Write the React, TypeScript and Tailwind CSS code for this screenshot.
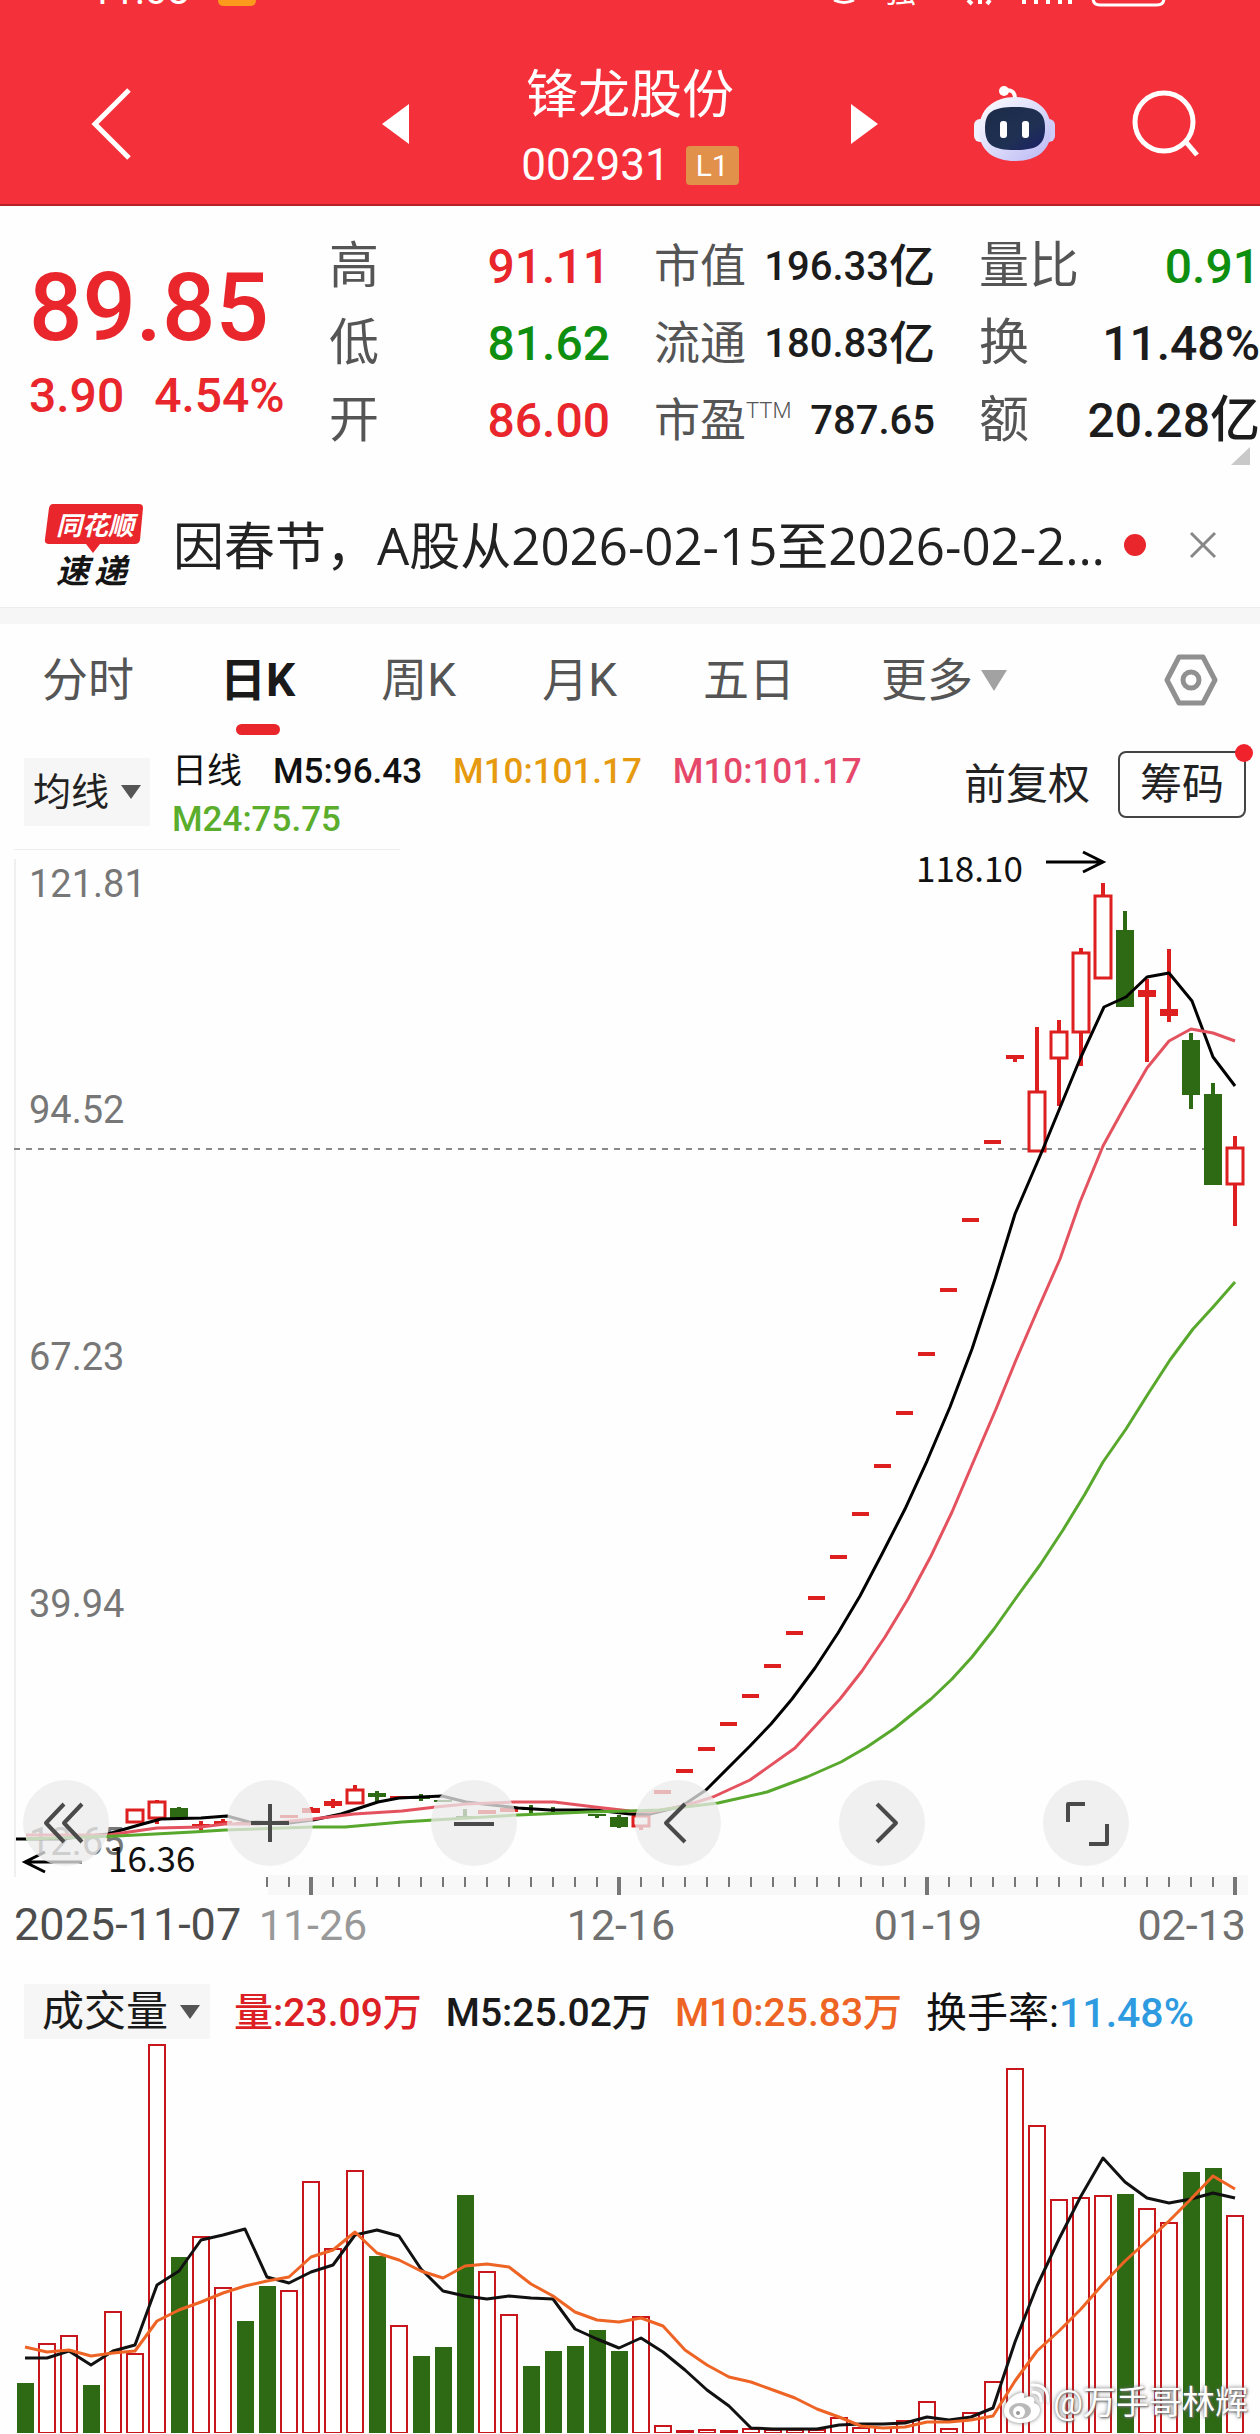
import { Fragment } from "react";

const RED = "#dd1f1f";
const GREEN = "#2e6a14";

// one slot per trading day
const STEP = 22;
const dayX = (i: number) => 25 + STEP * i;

type Candle = {
  i: number;
  up: boolean;
  top: number;
  bottom: number;
  high?: number;
  low?: number;
  solid?: boolean;
};

const candles: Candle[] = [
  { i: 5, up: true, top: 1811, bottom: 1823 },
  { i: 6, up: true, top: 1803, bottom: 1819, high: 1801, low: 1825 },
  { i: 7, up: false, top: 1809, bottom: 1820, high: 1808 },
  { i: 8, up: true, top: 1825, bottom: 1828, high: 1822, low: 1831, solid: true },
  { i: 9, up: true, top: 1822, bottom: 1826, high: 1820, solid: true },
  { i: 10, up: true, top: 1823, bottom: 1826, solid: true },
  { i: 12, up: true, top: 1816, bottom: 1819, solid: true },
  { i: 13, up: true, top: 1809, bottom: 1814, high: 1808, solid: true },
  { i: 14, up: true, top: 1802, bottom: 1807, high: 1800, low: 1809, solid: true },
  { i: 15, up: true, top: 1791, bottom: 1804, high: 1786 },
  { i: 16, up: false, top: 1794, bottom: 1798, high: 1792, low: 1803, solid: true },
  { i: 17, up: true, top: 1797, bottom: 1800, solid: true },
  { i: 18, up: false, top: 1797, bottom: 1800, high: 1795, low: 1802, solid: true },
  { i: 19, up: false, top: 1801, bottom: 1803, solid: true },
  { i: 20, up: false, top: 1817, bottom: 1819, high: 1810, solid: true },
  { i: 21, up: true, top: 1811, bottom: 1815, solid: true },
  { i: 22, up: true, top: 1809, bottom: 1813, solid: true },
  { i: 23, up: false, top: 1809, bottom: 1811, high: 1806, low: 1814, solid: true },
  { i: 24, up: false, top: 1810, bottom: 1812, high: 1808, low: 1813, solid: true },
  { i: 26, up: false, top: 1815, bottom: 1817, low: 1819, solid: true },
  { i: 27, up: false, top: 1818, bottom: 1828, high: 1816, low: 1829 },
  { i: 28, up: true, top: 1817, bottom: 1827, low: 1831 },
  { i: 45, up: true, top: 1056, bottom: 1060, low: 1063, solid: true },
  { i: 46, up: true, top: 1093, bottom: 1152, high: 1028 },
  { i: 47, up: true, top: 1033, bottom: 1059, high: 1021, low: 1107 },
  { i: 48, up: true, top: 954, bottom: 1033, high: 949, low: 1067 },
  { i: 49, up: true, top: 897, bottom: 979, high: 884 },
  { i: 50, up: false, top: 931, bottom: 1008, high: 912 },
  { i: 51, up: true, top: 991, bottom: 998, high: 980, low: 1063, solid: true },
  { i: 52, up: true, top: 1010, bottom: 1017, high: 950, low: 1023, solid: true },
  { i: 53, up: false, top: 1041, bottom: 1096, high: 1034, low: 1110 },
  { i: 54, up: false, top: 1095, bottom: 1186, high: 1084 },
  { i: 55, up: true, top: 1149, bottom: 1185, high: 1137, low: 1227 },
];

// limit-up days, open = close, starting at slot 29
const limitUps = [
  1793, 1772, 1750, 1725, 1697, 1667, 1634, 1599, 1558, 1515, 1467, 1414, 1355,
  1291, 1221, 1143,
];

const priceM5 =
  "16,1840 60,1840 108,1835 139,1826 161,1820 201,1819 227,1817 249,1823 289,1824 313,1821 341,1815 378,1803 399,1799 442,1797 466,1803 518,1809 550,1811 595,1811 630,1815 650,1815 682,1807 706,1791 750,1747 771,1725 792,1700 815,1669 838,1634 860,1597 882,1555 905,1510 927,1462 950,1408 972,1350 995,1280 1015,1215 1043,1150 1080,1060 1104,1008 1126,998 1147,978 1169,974 1192,1002 1213,1058 1235,1087";
const priceM10 =
  "26,1836 108,1836 157,1829 201,1828 225,1825 257,1825 313,1820 354,1815 402,1812 436,1808 466,1805 514,1803 554,1803 595,1808 630,1812 650,1813 684,1807 713,1798 750,1781 795,1749 819,1723 840,1700 862,1672 885,1638 908,1600 931,1557 952,1513 972,1466 996,1410 1016,1361 1038,1310 1060,1260 1080,1203 1103,1147 1125,1107 1147,1069 1169,1042 1191,1030 1213,1034 1235,1042";
const priceM24 =
  "26,1840 117,1837 193,1833 225,1831 313,1828 345,1828 402,1823 434,1821 518,1816 587,1813 630,1812 660,1811 718,1804 767,1793 807,1778 841,1763 867,1748 895,1729 931,1700 952,1680 972,1658 994,1630 1016,1599 1040,1566 1063,1531 1085,1495 1103,1463 1126,1430 1148,1395 1170,1361 1193,1330 1214,1307 1235,1283";

// [top, isUp]
const volumes: [number, boolean][] = [
  [2384, false], [2344, true], [2336, true], [2386, false], [2312, true],
  [2354, true], [2045, true], [2258, false], [2237, true], [2288, true],
  [2322, false], [2287, false], [2291, true], [2182, true], [2249, true],
  [2171, true], [2257, false], [2326, true], [2357, false], [2348, false],
  [2196, false], [2272, true], [2315, true], [2367, false], [2352, false],
  [2347, false], [2331, false], [2352, false], [2317, true], [2426, true],
  [2431, true], [2430, true], [2431, true], [2429, true], [2430, true],
  [2430, true], [2430, true], [2418, true], [2428, true], [2428, true],
  [2421, true], [2402, true], [2429, true], [2413, true], [2382, true],
  [2069, true], [2126, true], [2200, true], [2198, true], [2196, true],
  [2195, false], [2209, true], [2223, true], [2173, false], [2169, false],
  [2216, true],
];

const volM5 = [
  2359, 2359, 2352, 2366, 2352, 2346, 2286, 2272, 2241, 2236, 2230, 2278, 2284,
  2273, 2266, 2236, 2231, 2237, 2270, 2292, 2297, 2300, 2297, 2299, 2300, 2330,
  2340, 2349, 2339, 2353, 2371, 2391, 2407, 2429, 2430, 2430, 2430, 2426, 2425,
  2425, 2424, 2418, 2421, 2418, 2409, 2343, 2287, 2240, 2197, 2159, 2183, 2199,
  2204, 2200, 2194, 2199,
];
const volM10 = [
  2348, 2353, 2351, 2357, 2354, 2352, 2322, 2311, 2303, 2294, 2287, 2282, 2278,
  2258, 2251, 2233, 2254, 2261, 2272, 2279, 2267, 2265, 2268, 2285, 2297, 2313,
  2321, 2323, 2319, 2327, 2351, 2366, 2378, 2383, 2391, 2399, 2410, 2418, 2427,
  2429, 2428, 2423, 2423, 2421, 2417, 2382, 2352, 2332, 2310, 2285, 2262, 2242,
  2222, 2200, 2177, 2190,
];
const toPoints = (ys: number[]) => ys.map((y, i) => `${dayX(i)},${y}`).join(" ");

const priceLabels: [string, number][] = [
  ["121.81", 898],
  ["94.52", 1124],
  ["67.23", 1371],
  ["39.94", 1618],
  ["12.65", 1856],
];

const majorTicks = [13, 27, 41, 55];

function StatusBar() {
  return (
    <svg viewBox="0 0 1260 8" className="block w-full" aria-hidden="true">
      <g fill="#fff" fontSize="40">
        <text x="90" y="4">11:08</text>
        <text x="884" y="2" fontSize="32">强</text>
      </g>
      <path d="M218 -20h38v20q0 6-6 6h-26q-6 0-6-6z" fill="#fb9a1c" />
      <path d="M834 0q10 5 20 0" stroke="#fff" strokeWidth="3" fill="none" />
      <path d="M968 0l4 4M980 0v4M990 0l-3 4M1024 0v4M1036 0v4M1048 0v4M1060 0v4M1070 0v4" stroke="#fff" strokeWidth="4" />
      <path d="M1093 -10v8q0 7 7 7h57q7 0 7-7v-8" stroke="#fff" strokeWidth="3" fill="none" />
    </svg>
  );
}

function Robot() {
  return (
    <svg width="81" height="76" viewBox="0 0 81 76" aria-hidden="true">
      <defs>
        <linearGradient id="shell" x1="0" y1="0" x2="1" y2="1">
          <stop offset="0" stopColor="#fff" />
          <stop offset=".5" stopColor="#dcdcfb" />
          <stop offset="1" stopColor="#b9b6f2" />
        </linearGradient>
        <linearGradient id="visor" x1="0" y1="0" x2="1" y2="1">
          <stop offset="0" stopColor="#1c2a48" />
          <stop offset=".6" stopColor="#1f3152" />
          <stop offset="1" stopColor="#1b2068" />
        </linearGradient>
      </defs>
      <path d="M30 5q11-3 11 8" stroke="#fff" strokeWidth="4" fill="none" />
      <circle cx="30" cy="5" r="5" fill="#fff" />
      <rect x="0" y="33" width="14" height="23" rx="6" fill="#f1f0ff" />
      <rect x="67" y="33" width="14" height="23" rx="6" fill="#cfcdf8" />
      <path d="M41 11C62 11 77 23 77 44C77 65 62 75 41 75C20 75 5 65 5 44C5 23 20 11 41 11Z" fill="url(#shell)" />
      <path d="M41 21C63 21 71 26 71 42C71 59 63 64 41 64C19 64 11 59 11 42C11 26 19 21 41 21Z" fill="url(#visor)" />
      <rect x="26" y="35" width="7" height="17" rx="3" fill="#fff" />
      <rect x="48" y="35" width="7" height="17" rx="3" fill="#fff" />
    </svg>
  );
}

function Header() {
  return (
    <header className="bg-[#f4303a] border-b-2 border-[#b5202a] text-white">
      <StatusBar />
      <div className="grid grid-cols-[1fr_auto_1fr] items-center pt-[43px] pb-[7px]">
        <div className="pl-[91px]">
          <button aria-label="返回" className="block">
            <svg width="42" height="74" viewBox="0 0 42 74" fill="none" stroke="#fff" strokeWidth="5">
              <path d="M38 3L4 37l34 34" />
            </svg>
          </button>
        </div>
        <div className="flex items-center gap-[112px]">
          <button aria-label="上一只">
            <svg width="27" height="40" viewBox="0 0 27 40" fill="#fff"><path d="M27 0v40L0 20z" /></svg>
          </button>
          <div className="flex flex-col items-center pt-2">
            <h1 className="text-[52px] leading-[74px]">锋龙股份</h1>
            <div className="flex items-center gap-4 leading-[64px]">
              <span className="text-[44px]">002931</span>
              <span className="bg-[#e2914a] rounded-sm w-[53px] h-[39px] text-center text-[30px] leading-[39px]">L1</span>
            </div>
          </div>
          <button aria-label="下一只">
            <svg width="27" height="40" viewBox="0 0 27 40" fill="#fff"><path d="M0 0v40l27-20z" /></svg>
          </button>
        </div>
        <div className="flex items-center justify-end gap-[77px] pr-[60px]">
          <button aria-label="智能助手"><Robot /></button>
          <button aria-label="搜索">
            <svg width="68" height="68" viewBox="0 0 68 68" fill="none" stroke="#fff" strokeWidth="5">
              <circle cx="32" cy="32" r="29" />
              <path d="M54 52l11 13" />
            </svg>
          </button>
        </div>
      </div>
    </header>
  );
}

type StatProps = { label: string; value: string; unit?: string; sup?: string; color?: string; small?: boolean };

function Stat({ label, value, unit, sup, color = "text-[#1c1c1c]", small }: StatProps) {
  return (
    <div className="flex h-[77px] items-center justify-between whitespace-nowrap">
      <dt className={`flex text-[#555] ${small ? "text-[46px]" : "text-[50px]"}`}>
        {label}
        {sup && <sup className="top-0 text-[22px] leading-[50px] font-light">{sup}</sup>}
      </dt>
      <dd className={`flex items-center font-medium ${small ? "text-[40px]" : "text-[48px]"} ${color}`}>
        {value}
        {unit && <span className={small ? "text-[46px]" : "text-[50px]"}>{unit}</span>}
      </dd>
    </div>
  );
}

function Quote() {
  return (
    <section className="relative flex pt-[22px] pb-[10px] pl-[29px]">
      <div className="w-[300px] shrink-0 pt-[25px] font-medium text-[#e8262b]">
        <p className="text-[94px] leading-[110px]">89.85</p>
        <p className="flex gap-[30px] text-[48px] leading-[66px]">
          <span>3.90</span>
          <span>4.54%</span>
        </p>
      </div>
      <dl className="grid flex-1 grid-cols-3 gap-x-[44px]">
        <Stat label="高" value="91.11" color="text-[#e8262b]" />
        <Stat label="市值" value="196.33" unit="亿" small />
        <Stat label="量比" value="0.91" color="text-[#0f8f0f]" />
        <Stat label="低" value="81.62" color="text-[#0f8f0f]" />
        <Stat label="流通" value="180.83" unit="亿" small />
        <Stat label="换" value="11.48%" />
        <Stat label="开" value="86.00" color="text-[#e8262b]" />
        <Stat label="市盈" sup="TTM" value="787.65" small />
        <Stat label="额" value="20.28" unit="亿" />
      </dl>
      <svg className="absolute right-[10px] bottom-[4px]" width="19" height="18" viewBox="0 0 19 18" fill="#c9c9c9">
        <path d="M19 0v18H0z" />
      </svg>
    </section>
  );
}

function News() {
  return (
    <section className="flex h-[139px] items-center border-b border-[#eee] pt-[14px] pl-[44px] pr-[43px]">
      <svg width="100" height="84" viewBox="0 0 100 84" className="shrink-0" fontFamily="'Noto Sans CJK SC', sans-serif" fontWeight="700">
        <path d="M9 1H95q4 0 4 4L96 37q-1 4-5 4H56l-7 9-7-9H5q-5 0-4-5L5 5q1-4 4-4z" fill="#e8262b" />
        <text x="12" y="32" fontSize="26" fill="#fff" fontStyle="italic">同花顺</text>
        <text x="12" y="80" fontSize="33" fill="#151515" fontStyle="italic">速</text>
        <text x="50" y="80" fontSize="33" fill="#151515" fontStyle="italic">递</text>
      </svg>
      <a href="#news" className="ml-[29px] flex-1 truncate font-['Open_Sans','Noto_Sans_CJK_SC',sans-serif] text-[51px] text-[#222]">
        因春节，A股从2026-02-15至2026-02-2…
      </a>
      <span className="size-[22px] shrink-0 rounded-full bg-[#e8262b]" />
      <button aria-label="关闭" className="ml-[43px]">
        <svg width="28" height="28" viewBox="0 0 28 28" stroke="#888" strokeWidth="3"><path d="M2 2l24 24M26 2L2 26" /></svg>
      </button>
    </section>
  );
}

const tabs = ["分时", "日K", "周K", "月K", "五日"];

function Tabs() {
  return (
    <nav className="flex h-[120px] items-start justify-between pl-[42px] pr-[42px] pt-[20px]">
      <div className="flex gap-[86px] text-[46px] leading-[72px] text-[#555]">
        {tabs.map((t) =>
          t === "日K" ? (
            <button key={t} className="flex flex-col items-center font-bold text-[#1a1a1a]">
              {t}
              <span className="mt-2 h-[11px] w-[44px] rounded-full bg-[#e8262b]" />
            </button>
          ) : (
            <button key={t} className="self-start">{t}</button>
          )
        )}
        <button className="flex items-center gap-2 self-start">
          更多
          <svg width="26" height="21" viewBox="0 0 26 21" fill="#a2a2a2"><path d="M0 0h26L13 21z" /></svg>
        </button>
      </div>
      <button aria-label="设置" className="mt-[10px]">
        <svg width="54" height="52" viewBox="0 0 54 52" fill="none" stroke="#909090" strokeWidth="5" strokeLinejoin="round">
          <path d="M15 3h24l12 23-12 23H15L3 26z" />
          <circle cx="27" cy="26" r="8" />
        </svg>
      </button>
    </nav>
  );
}

function Caret() {
  return <svg width="20" height="14" viewBox="0 0 20 14" fill="#555"><path d="M0 0h20L10 14z" /></svg>;
}

function Averages() {
  return (
    <section className="flex h-[105px] items-start">
      <button className="ml-[24px] mt-[14px] flex h-[68px] w-[126px] shrink-0 items-center justify-center gap-3 bg-[#f6f6f6] text-[38px] text-[#222]">
        均线
        <Caret />
      </button>
      <div className="ml-[22px] flex flex-1 flex-wrap gap-x-[31px] whitespace-nowrap pt-1 text-[35px] leading-[48px] font-medium">
        <span className="font-normal text-[#111]">日线</span>
        <span className="text-[#111]">M5:96.43</span>
        <span className="text-[#e59a10]">M10:101.17</span>
        <span className="text-[#e6486a]">M10:101.17</span>
        <span className="text-[#5bad2c]">M24:75.75</span>
      </div>
      <button className="mt-[8px] text-[42px] leading-[66px] text-[#222]">前复权</button>
      <button className="relative ml-[28px] mr-[14px] mt-[7px] h-[67px] w-[128px] rounded-lg border-2 border-[#444] text-[42px] leading-[62px] text-[#222]">
        筹码
        <span className="absolute -right-[9px] -top-[9px] size-[18px] rounded-full bg-[#f0222c]" />
      </button>
    </section>
  );
}

function PriceChart() {
  return (
    <svg viewBox="0 850 1260 1115" className="block w-full" fill="none">
      <path d="M14 850H400" stroke="#eeeeee" strokeWidth="2" />
      <path d="M15 860V1878" stroke="#f0f0f0" strokeWidth="2" />
      <rect x="268" y="1876" width="980" height="20" fill="#f8f8f8" />
      {priceLabels.map(([t, y]) => (
        <text key={t} x="29" y={y} fontSize="38" fill="#777">{t}</text>
      ))}
      <path d="M14 1150H1215" stroke="#888" strokeWidth="2" strokeDasharray="6 6" />

      {candles.map((c) => {
        const x = dayX(c.i);
        const color = c.up ? RED : GREEN;
        return (
          <Fragment key={c.i}>
            {c.high && <path d={`M${x} ${c.high}V${c.top}`} stroke={color} strokeWidth="4" />}
            {c.low && <path d={`M${x} ${c.bottom}V${c.low}`} stroke={color} strokeWidth="4" />}
            {c.up && !c.solid ? (
              <rect x={x - 8} y={c.top} width="16" height={c.bottom - c.top} fill="#fff" stroke={color} strokeWidth="3" />
            ) : (
              <rect x={x - 9} y={c.top} width="18" height={c.bottom - c.top} fill={color} />
            )}
          </Fragment>
        );
      })}
      {limitUps.map((y, n) => (
        <rect key={y} x={dayX(29 + n) - 9} y={y - 2} width="17" height="4" fill={RED} />
      ))}

      <g strokeWidth="3" strokeLinejoin="round">
        <polyline points={priceM5} stroke="#000" />
        <polyline points={priceM10} stroke="#e4525f" />
        <polyline points={priceM24} stroke="#57a82c" />
      </g>

      <text x="916" y="883" fontSize="35" fill="#111" fontFamily="'Noto Sans CJK SC', sans-serif">118.10</text>
      <path d="M1046 863h56M1083 853l20 10-20 10" stroke="#000" strokeWidth="3" />
      <text x="108" y="1873" fontSize="35" fill="#111" fontFamily="'Noto Sans CJK SC', sans-serif">16.36</text>
      <path d="M82 1863H26M45 1853l-20 10 20 10" stroke="#000" strokeWidth="3" />

      {Array.from({ length: 45 }, (_, n) => n + 11).map((i) => (
        <path
          key={i}
          d={majorTicks.includes(i) ? `M${dayX(i)} 1878v18` : `M${dayX(i)} 1878v10`}
          stroke="#777"
          strokeWidth={majorTicks.includes(i) ? 4 : 2}
        />
      ))}
      <g fontSize="43" fill="#707070">
        <text x="14" y="1941" fontSize="45" fill="#4d4d4d">2025-11-07</text>
        <text x="313" y="1941" textAnchor="middle" fill="#999">11-26</text>
        <text x="621" y="1941" textAnchor="middle">12-16</text>
        <text x="928" y="1941" textAnchor="middle">01-19</text>
        <text x="1246" y="1941" textAnchor="end">02-13</text>
      </g>
    </svg>
  );
}

const tools = [
  { name: "最左", d: "M41 24L23 43l18 19M59 24L41 43l18 19" },
  { name: "放大", d: "M43 24v38M24 43h38" },
  { name: "缩小", d: "M23 44h40" },
  { name: "左移", d: "M50 24L31 43l19 19" },
  { name: "右移", d: "M38 24l19 19-19 19" },
  { name: "全屏", d: "M42 24H25v18M64 44v20H46" },
];

function ChartTools() {
  return (
    <div className="absolute bottom-[98px] left-[23px] right-[131px] flex justify-between">
      {tools.map((t) => (
        <button key={t.name} aria-label={t.name} className="size-[86px] rounded-full bg-[#ebebeb]/75">
          <svg width="86" height="86" viewBox="0 0 86 86" fill="none" stroke="#4a4a4a" strokeWidth="4" strokeLinejoin="round">
            <path d={t.d} />
          </svg>
        </button>
      ))}
    </div>
  );
}

function VolumeHeader() {
  return (
    <div className="flex h-[75px] items-start gap-[24px] whitespace-nowrap pl-[24px] pt-[20px] text-[39px] leading-[58px] font-medium">
      <button className="flex h-[55px] items-center gap-3 bg-[#f6f6f6] pl-[18px] pr-[10px] text-[42px] font-normal text-[#1a1a1a]">
        成交量
        <Caret />
      </button>
      <span className="text-[#dd1f26]">量:23.09万</span>
      <span className="text-[#1a1a1a]">M5:25.02万</span>
      <span className="text-[#ee6424]">M10:25.83万</span>
      <span className="text-[41px] font-normal text-[#111]">
        换手率:<span className="font-medium text-[#2e9be0]">11.48%</span>
      </span>
    </div>
  );
}

function VolumeChart() {
  return (
    <svg viewBox="0 2040 1260 394" className="block w-full" fill="none">
      {volumes.map(([top, up], i) =>
        up ? (
          <rect key={i} x={dayX(i) - 8} y={top + 1} width="16" height={2433 - top} fill="#fff" stroke="#c8171c" strokeWidth="2" />
        ) : (
          <rect key={i} x={dayX(i) - 8} y={top} width="17" height={2434 - top} fill={GREEN} />
        )
      )}
      <g strokeWidth="3" strokeLinejoin="round">
        <polyline points={toPoints(volM5)} stroke="#111" />
        <polyline points={toPoints(volM10)} stroke="#ee6424" />
      </g>
    </svg>
  );
}

function Watermark() {
  return (
    <div className="absolute bottom-[6px] right-[12px] flex items-center gap-1 text-[33px] leading-[48px] text-white [text-shadow:0_0_4px_#666,1px_1px_2px_#777]">
      <svg width="46" height="42" viewBox="0 0 46 42" fill="none" className="drop-shadow-[0_0_2px_#777]">
        <path d="M17 11C8 13 1 22 1 29C1 37 9 41 18 41C29 41 37 35 37 28C37 24 34 22 31 21C33 14 27 13 21 16C22 12 21 10 17 11Z" fill="#fff" />
        <ellipse cx="17" cy="29" rx="11" ry="8" fill="#b9b9b9" />
        <ellipse cx="16" cy="30" rx="6" ry="6" fill="#fff" />
        <circle cx="15" cy="31" r="2" fill="#999" />
        <path d="M30 10q8 0 8 9M29 3q16-1 16 16" stroke="#fff" strokeWidth="3" strokeLinecap="round" />
      </svg>
      <span>@万手哥林辉</span>
    </div>
  );
}

export default function App() {
  return (
    <main className="relative w-full overflow-hidden bg-[#fefefe] font-[Roboto,'Noto_Sans_CJK_SC',sans-serif]">
      <Header />
      <Quote />
      <News />
      <div className="h-[16px] bg-[#f6f6f6]" />
      <Tabs />
      <Averages />
      <div className="relative">
        <PriceChart />
        <ChartTools />
      </div>
      <VolumeHeader />
      <div className="relative">
        <VolumeChart />
        <Watermark />
      </div>
    </main>
  );
}
